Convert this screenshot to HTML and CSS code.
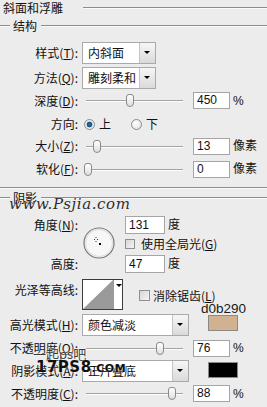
FILE: index.html
```html
<!DOCTYPE html>
<html lang="zh-CN">
<head>
    <meta charset="UTF-8">
    <title>斜面和浮雕</title>
    <link rel="stylesheet" href="styles.css">
</head>
<body>
    <div class="panel">
        <div class="title"><span>斜面和浮雕</span><i class="rule"></i></div>
        <div class="group-head"><i class="rule lead"></i><span>结构</span><i class="rule"></i></div>

        <div class="row r-style">
            <label>样式(<u>T</u>):</label>
            <div class="combo narrow"><span>内斜面</span><b class="drop"></b></div>
        </div>
        <div class="row r-method">
            <label>方法(<u>Q</u>):</label>
            <div class="combo narrow"><span>雕刻柔和</span><b class="drop"></b></div>
        </div>
        <div class="row r-depth">
            <label>深度(<u>D</u>):</label>
            <div class="ctl">
                <div class="slider"><span class="thumb" style="left: 40px"></span></div>
                <div class="field">450</div>
                <span class="unit">%</span>
            </div>
        </div>
        <div class="row r-dir">
            <label>方向:</label>
            <div class="ctl radios">
                <span class="radio on"></span><span class="opt">上</span>
                <span class="radio"></span><span class="opt">下</span>
            </div>
        </div>
        <div class="row r-size">
            <label>大小(<u>Z</u>):</label>
            <div class="ctl">
                <div class="slider"><span class="thumb" style="left: 7px"></span></div>
                <div class="field">13</div>
                <span class="unit">像素</span>
            </div>
        </div>
        <div class="row r-soft">
            <label>软化(<u>F</u>):</label>
            <div class="ctl">
                <div class="slider"><span class="thumb" style="left: -2px"></span></div>
                <div class="field">0</div>
                <span class="unit">像素</span>
            </div>
        </div>

        <div class="rule sep"></div>
        <div class="group-head shade-head"><i class="rule lead"></i><span>阴影</span><i class="rule"></i></div>

        <div class="angle-block">
            <label class="a-label">角度(<u>N</u>):</label>
            <div class="dial">
                <svg width="32" height="32" viewBox="0 0 32 32">
                    <circle cx="16" cy="16" r="15" fill="#f7f7f7" stroke="#7a7a7a" stroke-width="1.2"/>
                    <circle cx="16" cy="16" r="13.5" fill="none" stroke="#dcdcdc" stroke-width="1"/>
                    <path d="M13 10v1M13 14v1M11 12.5h1M14 12.5h1" stroke="#333" stroke-width="1"/>
                    <rect x="16" y="16" width="2" height="2" fill="#000"/>
                </svg>
            </div>
            <div class="a-field"><div class="field wide">131</div><span class="unit">度</span></div>
            <div class="a-check"><span class="check"></span><span>使用全局光(<u>G</u>)</span></div>
            <label class="h-label">高度:</label>
            <div class="h-field"><div class="field wide">47</div><span class="unit">度</span></div>
        </div>

        <div class="row r-contour">
            <label>光泽等高线:</label>
            <div class="ctl">
                <div class="contour">
                    <svg class="curve" width="30" height="29" viewBox="0 0 30 29">
                        <rect width="30" height="29" fill="#fff"/>
                        <polygon points="0,29 30,0 30,29" fill="#9a9a9a"/>
                    </svg>
                    <b class="mini-drop"></b>
                </div>
                <span class="check"></span><span class="check-text">消除锯齿(<u>L</u>)</span>
            </div>
            <span class="hex">d0b290</span>
        </div>

        <div class="row r-hmode">
            <label>高光模式(<u>H</u>):</label>
            <div class="ctl top">
                <div class="combo wide"><span>颜色减淡</span><b class="drop"></b></div>
                <span class="swatch tan"></span>
            </div>
        </div>
        <div class="row r-op1">
            <label>不透明度(<u>O</u>):</label>
            <div class="ctl">
                <div class="slider"><span class="thumb" style="left: 70px"></span></div>
                <div class="field">76</div>
                <span class="unit">%</span>
            </div>
        </div>
        <div class="row r-smode">
            <label>阴影模式(<u>A</u>):</label>
            <div class="ctl top">
                <div class="combo wide"><span>正片叠底</span><b class="drop"></b></div>
                <span class="swatch black"></span>
            </div>
        </div>
        <div class="row r-op2">
            <label>不透明度(<u>C</u>):</label>
            <div class="ctl">
                <div class="slider"><span class="thumb" style="left: 82px"></span></div>
                <div class="field">88</div>
                <span class="unit">%</span>
            </div>
        </div>

        <div class="mark-site">www.Psjia.com</div>
        <div class="mark-cn">一起ps吧</div>
        <div class="mark-logo">17PS8<small>.COM</small></div>
    </div>
</body>
</html>
```

FILE: styles.css
```css
body {
    margin: 0;
    background-color: #ececec;
    font-family: "Noto Sans CJK SC", sans-serif;
    font-size: 12px;
    color: #111;
}
.panel {
    position: relative;
    width: 267px;
    height: 407px;
    overflow: hidden;
}
u {
    text-decoration: underline;
    text-underline-offset: 1px;
}
.rule {
    display: block;
    flex: 1;
    height: 0;
    border-top: 1px solid #8c8c8c;
    border-bottom: 1px solid #fafafa;
}
.title {
    display: flex;
    align-items: center;
    height: 16px;
    padding-left: 3px;
    line-height: 14px;
}
.title .rule {
    margin-left: 20px;
}
.group-head {
    display: flex;
    align-items: center;
    height: 20px;
    line-height: 14px;
}
.group-head .lead {
    flex: none;
    width: 10px;
    margin-right: 3px;
}
.group-head span + .rule {
    margin-left: 4px;
}
.row {
    display: grid;
    grid-template-columns: 78px 1fr;
    column-gap: 4px;
    align-items: center;
}
.row label, .angle-block label {
    text-align: right;
    white-space: nowrap;
    line-height: 14px;
}
.ctl {
    display: flex;
    align-items: center;
}
.ctl.top {
    align-items: flex-start;
}
.combo {
    display: flex;
    height: 22px;
    box-sizing: border-box;
    border: 1px solid #a9a9a9;
    background-color: #fff;
}
.combo.narrow { width: 74px; }
.combo.wide { width: 107px; }
.combo span {
    flex: 1;
    padding-left: 5px;
    line-height: 20px;
    white-space: nowrap;
    overflow: hidden;
}
.drop {
    position: relative;
    width: 15px;
    border-left: 1px solid #c4c4c4;
    background: linear-gradient(#f6f6f6, #dadada);
}
.drop::after {
    content: "";
    position: absolute;
    left: 4px;
    top: 8px;
    border-left: 3px solid transparent;
    border-right: 3px solid transparent;
    border-top: 3px solid #000;
}
.slider {
    position: relative;
    width: 97px;
    height: 13px;
    margin-left: 4px;
}
.slider::before {
    content: "";
    position: absolute;
    left: 0;
    right: 0;
    top: 6px;
    height: 1px;
    background-color: #a4a4a4;
    border-bottom: 1px solid #fdfdfd;
}
.thumb {
    position: absolute;
    top: 0;
    width: 8px;
    height: 13px;
    box-sizing: border-box;
    border: 1px solid #8a8a8a;
    border-radius: 3px 3px 4px 4px;
    background: linear-gradient(#fff, #dedede);
}
.field {
    width: 37px;
    height: 17px;
    margin-left: 10px;
    box-sizing: border-box;
    border: 1px solid #a5a5a5;
    background-color: #fff;
    padding-left: 3px;
    font-family: "Liberation Sans", sans-serif;
    font-size: 12px;
    line-height: 15px;
}
.field.wide {
    width: 40px;
    height: 18px;
    margin-left: 0;
    line-height: 16px;
}
.unit {
    margin-left: 3px;
    line-height: 14px;
    font-family: "Liberation Sans", "Noto Sans CJK SC", sans-serif;
}
.radios .radio {
    width: 11px;
    height: 11px;
    margin-left: 2px;
    box-sizing: border-box;
    border: 1px solid #8c8c8c;
    border-radius: 50%;
    background: radial-gradient(circle at 40% 35%, #fff, #dcdcdc);
}
.radios .radio.on {
    background: radial-gradient(circle, #2b6fa8 0, #1a4f7e 2.5px, #dfe8ef 3.2px, #f4f4f4 100%);
}
.radios .opt {
    margin-left: 4px;
    margin-right: 18px;
    line-height: 14px;
}
.check {
    display: inline-block;
    flex: none;
    width: 10px;
    height: 10px;
    box-sizing: border-box;
    border: 1px solid #8f8f8f;
    background: linear-gradient(135deg, #d6d6d6, #f5f5f5);
}
.r-style { margin-top: 6px; }
.r-method { margin-top: 3px; }
.r-depth { margin-top: 2px; height: 19px; }
.r-dir { margin-top: 4px; height: 20px; }
.r-size { margin-top: 3px; height: 18px; }
.r-soft { margin-top: 5px; height: 18px; }
.sep {
    margin-top: 9px;
}
.shade-head {
    height: 18px;
}
.angle-block {
    display: grid;
    grid-template-columns: 78px 47px 1fr;
    grid-template-rows: 18px 20px 19px;
    align-items: center;
    margin-top: 9px;
}
.a-label { grid-column: 1; grid-row: 1; }
.dial {
    grid-column: 2;
    grid-row: 1 / 4;
    align-self: start;
    margin: 11px 0 0 5px;
    height: 32px;
}
.a-field, .h-field {
    display: flex;
    align-items: center;
    grid-column: 3;
}
.a-field { grid-row: 1; }
.h-field { grid-row: 3; align-self: end; }
.h-label { grid-column: 1; grid-row: 3; }
.a-check {
    grid-column: 3;
    grid-row: 2;
    display: flex;
    align-items: center;
    line-height: 14px;
}
.a-check .check {
    margin-right: 6px;
}
.r-contour {
    position: relative;
    margin-top: 6px;
    height: 31px;
    align-items: start;
}
.r-contour label {
    margin-top: 4px;
}
.r-contour .ctl {
    height: 31px;
}
.contour {
    display: flex;
    width: 41px;
    height: 31px;
    box-sizing: border-box;
    border: 1px solid #3c3c3c;
    background-color: #fff;
}
.curve {
    display: block;
}
.mini-drop {
    position: relative;
    flex: 1;
    border-left: 1px solid #9a9a9a;
}
.mini-drop::after {
    content: "";
    position: absolute;
    left: 2px;
    top: 4px;
    border-left: 3px solid transparent;
    border-right: 3px solid transparent;
    border-top: 3px solid #000;
}
.r-contour .check {
    width: 11px;
    height: 11px;
    margin: 2px 0 0 16px;
}
.check-text {
    margin: 2px 0 0 3px;
    line-height: 14px;
}
.hex {
    position: absolute;
    left: 201px;
    top: 23px;
    font-family: "Liberation Sans", sans-serif;
    font-size: 13.5px;
    line-height: 14px;
    color: #1a1a1a;
}
.r-hmode { margin-top: 4px; height: 22px; }
.r-op1 { margin-top: 3px; height: 18px; }
.r-smode { margin-top: 3px; height: 22px; }
.r-op2 { margin-top: 2px; height: 19px; }
.swatch {
    width: 30px;
    height: 16px;
    margin: 1px 0 0 19px;
    box-sizing: border-box;
    border: 1px solid #8a8a8a;
}
.swatch.tan { background-color: #d0b290; }
.swatch.black { background-color: #000; margin-top: 2px; }
.mark-site {
    position: absolute;
    left: 9px;
    top: 195px;
    font-family: "DejaVu Serif", serif;
    font-style: italic;
    font-size: 15px;
    letter-spacing: 0.6px;
    color: #2c2c2c;
    text-shadow: 0 0 1px #fff;
}
.mark-cn {
    position: absolute;
    left: 33px;
    top: 346px;
    font-size: 13px;
    line-height: 16px;
    color: #3a3a3a;
    text-shadow: 0 0 2px #fff, 0 0 2px #fff;
}
.mark-logo {
    position: absolute;
    left: 36px;
    top: 360px;
    font-family: "DejaVu Sans", sans-serif;
    font-weight: bold;
    font-size: 15px;
    line-height: 15px;
    letter-spacing: 0.5px;
    color: #111;
    text-shadow: 0 0 2px #fff;
}
.mark-logo small {
    font-size: 11px;
}
```
